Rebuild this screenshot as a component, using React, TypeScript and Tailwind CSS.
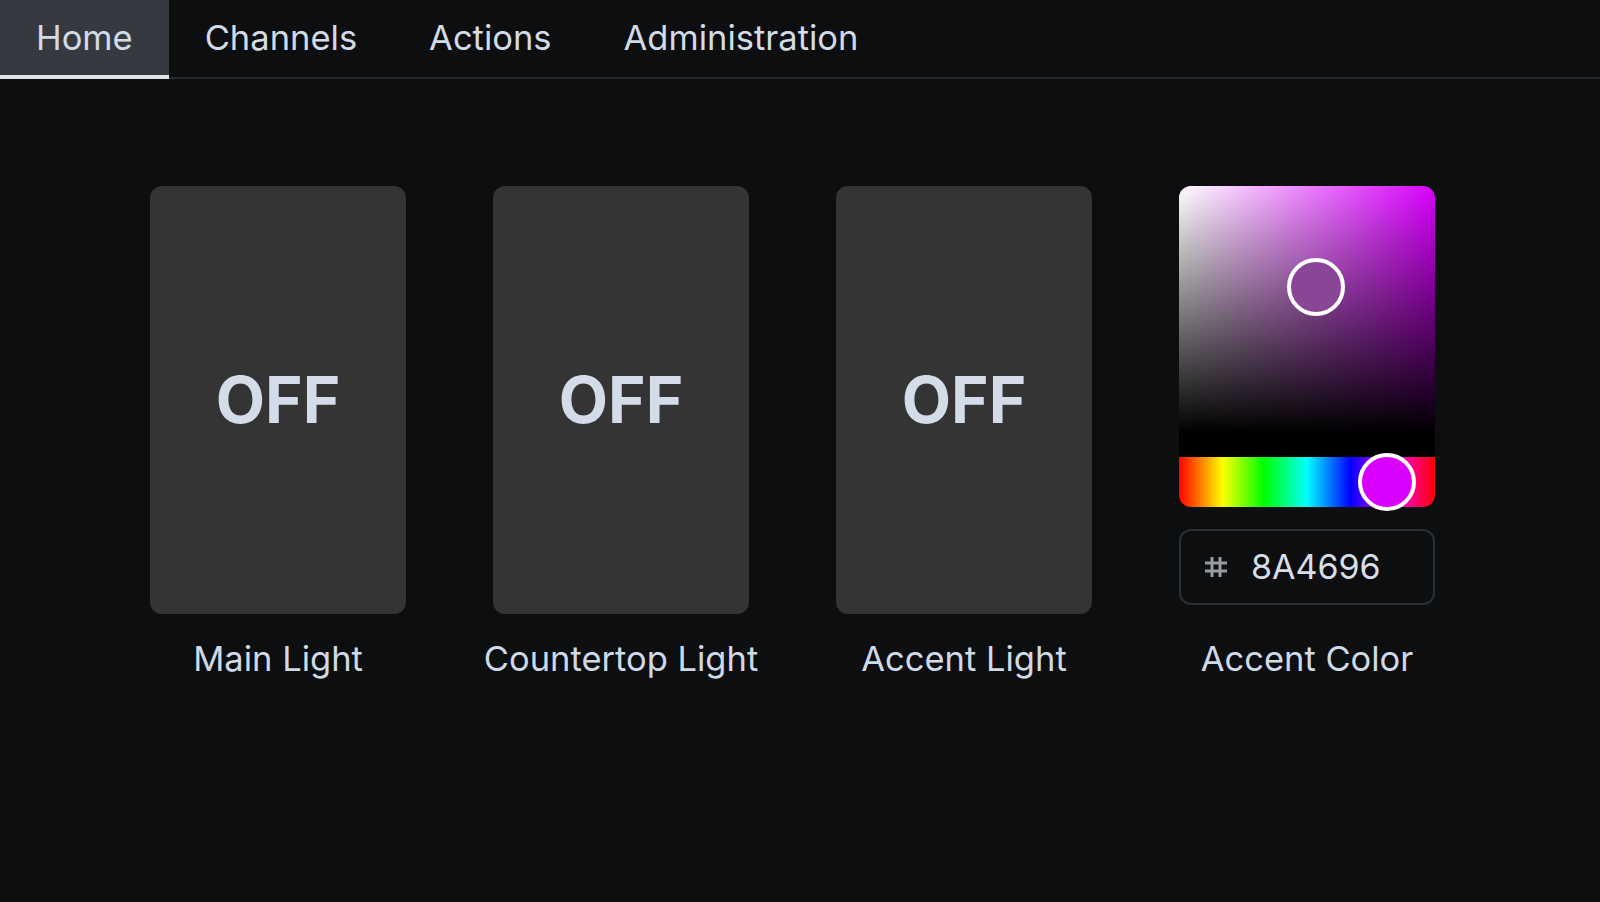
import { useState } from 'react';

const tabs = ['Home', 'Channels', 'Actions', 'Administration'];
const lights = ['Main Light', 'Countertop Light', 'Accent Light'];

function HashIcon() {
  return (
    <svg width="24" height="22" viewBox="0 0 24 22" fill="none" stroke="currentColor" strokeWidth={3}>
      <path d="M1 7h22M1 15h22M8 1v20M16 1v20" />
    </svg>
  );
}

function ColorPicker({ hex }: { hex: string }) {
  return (
    <div className="flex w-[256px] flex-col items-center">
      {/* Saturation / value area */}
      <div className="relative h-[271px] w-full rounded-t-xl border-b-[24px] border-black bg-[#d900ff] bg-[linear-gradient(to_top,#000,transparent),linear-gradient(to_right,#fff,transparent)]">
        <div className="absolute left-[108px] top-[72px] h-[58px] w-[58px] rounded-full border-4 border-white bg-[#8a4696]" />
      </div>
      {/* Hue bar */}
      <div className="relative h-[50px] w-full rounded-b-xl bg-[linear-gradient(to_right,#f00_0%,#ff0_17%,#0f0_33%,#0ff_50%,#00f_67%,#f0f_83%,#f00_100%)]">
        <div className="absolute left-[179px] top-[-4px] h-[58px] w-[58px] rounded-full border-4 border-white bg-[#d900ff]" />
      </div>
      <div className="mt-[22px] flex h-[76px] w-full items-center gap-[23px] rounded-xl border-2 border-[#2c3035] pl-[23px] text-[#959ba3]">
        <HashIcon />
        <span className="text-[34px] leading-none text-[#d7dee8]">{hex}</span>
      </div>
      <div className="mt-[30px] whitespace-nowrap text-[34.5px] leading-[48px] text-[#d0dae6]">Accent Color</div>
    </div>
  );
}

export default function App() {
  const [active, setActive] = useState('Home');

  return (
    <div className="min-h-screen bg-[#0c0e10] font-['Inter','Liberation_Sans',sans-serif]">
      <nav className="flex border-b-2 border-[#25282c]">
        {tabs.map((t) => (
          <button
            key={t}
            onClick={() => setActive(t)}
            className={`-mb-[2px] flex h-[79px] items-center border-b-4 px-[36px] text-[34.5px] text-[#d3dbe6] ${
              active === t ? 'border-[#dfe3ea] bg-[#363a40]' : 'border-transparent'
            }`}
          >
            {t}
          </button>
        ))}
      </nav>

      <main className="flex items-start gap-[87px] pl-[150px] pt-[107px]">
        {lights.map((name) => (
          <div key={name} className="flex w-[256px] flex-col items-center">
            <button className="flex h-[428px] w-full items-center justify-center rounded-xl bg-[#343434]">
              <span className="text-[64px] font-bold leading-none text-[#d3dce8]">OFF</span>
            </button>
            <div className="mt-[21px] whitespace-nowrap text-[34.5px] leading-[48px] text-[#d0dae6]">{name}</div>
          </div>
        ))}
        <ColorPicker hex="8A4696" />
      </main>
    </div>
  );
}
